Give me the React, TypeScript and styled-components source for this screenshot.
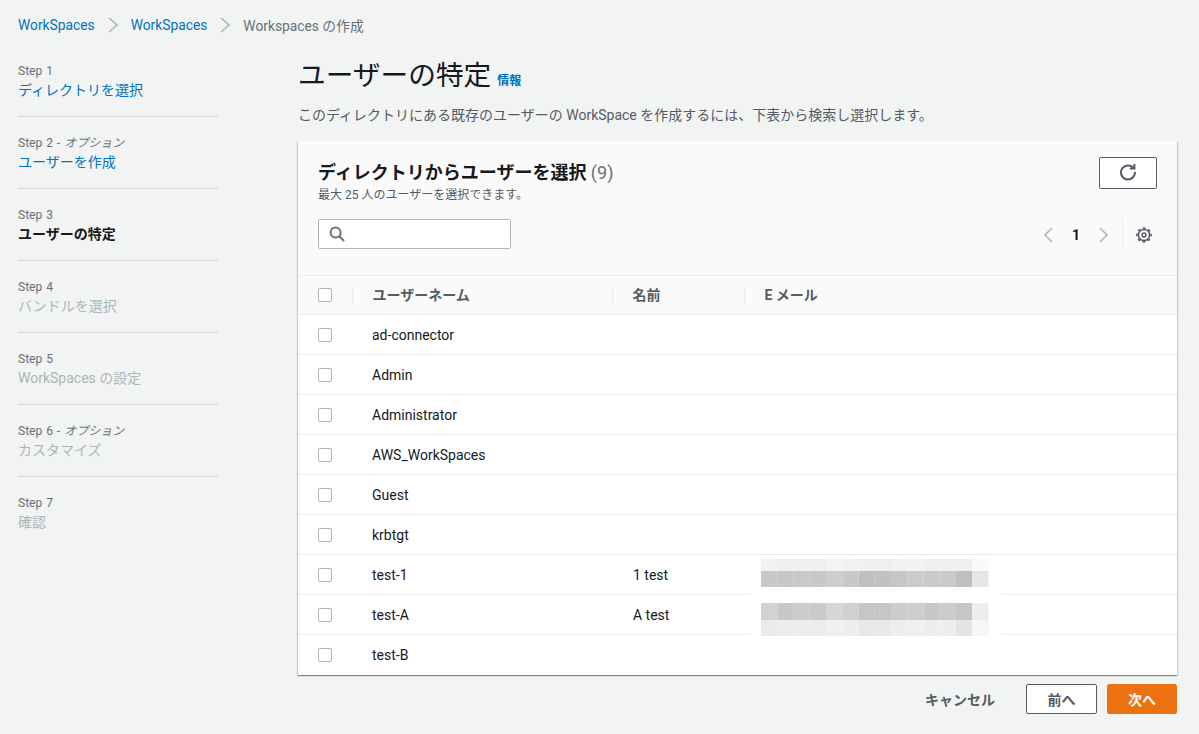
import styled, { createGlobalStyle } from "styled-components";

const GlobalStyle = createGlobalStyle`
  html, body {
    margin: 0;
    padding: 0;
    background-color: #f2f3f3;
    font-family: Roboto, "Noto Sans CJK JP", sans-serif;
    color: #16191f;
  }
  * {
    box-sizing: border-box;
  }
`;

const S = {
  Page: styled.div`
    width: 1199px;
    height: 734px;
    overflow: hidden;
    padding: 0 22px 0 18px;
  `,
  Breadcrumbs: styled.nav`
    display: flex;
    align-items: center;
    height: 50px;
    font-size: 13.8px;
  `,
  Crumb: styled.a<{ $current?: boolean }>`
    color: ${(p) => (p.$current ? "#687078" : "#0073bb")};
    white-space: nowrap;
  `,
  CrumbSep: styled.svg`
    width: 14px;
    height: 16px;
    margin: 0 11px;
    fill: none;
    stroke: #aab7b8;
    stroke-width: 1.6;
  `,
  Columns: styled.div`
    display: flex;
  `,
  Steps: styled.ol`
    list-style: none;
    margin: 0;
    padding: 0;
    width: 200px;
    margin-right: 80px;
    flex: none;
  `,
  Step: styled.li`
    height: 67px;
    margin-bottom: 5px;
    padding-top: 12px;
    border-bottom: 1px solid #d5dbdb;
    &:last-child {
      border-bottom: none;
    }
  `,
  StepLabel: styled.div`
    font-size: 12px;
    line-height: 18px;
    word-spacing: 1px;
    color: #687078;
    em {
      font-style: italic;
    }
  `,
  StepName: styled.div<{ $state: "done" | "active" | "todo" }>`
    font-size: 14px;
    line-height: 20px;
    color: ${(p) =>
      p.$state === "done" ? "#0073bb" : p.$state === "active" ? "#16191f" : "#aab7b8"};
    font-weight: ${(p) => (p.$state === "active" ? 700 : 400)};
  `,
  Main: styled.main`
    width: 879px;
    flex: none;
  `,
  Title: styled.div`
    display: flex;
    align-items: baseline;
    gap: 6px;
    height: 50px;
    padding-top: 6px;
  `,
  H1: styled.h1`
    margin: 0;
    font-size: 27.7px;
    line-height: 40px;
    font-weight: 400;
    color: #16191f;
  `,
  Info: styled.a`
    font-size: 12px;
    font-weight: 700;
    color: #0073bb;
  `,
  Lead: styled.p`
    margin: 0;
    height: 41px;
    padding-top: 5px;
    font-size: 14px;
    line-height: 20px;
    color: #545b64;
  `,
  Card: styled.section`
    position: relative;
    height: 534px;
    background-color: #fff;
    box-shadow: 0 1px 1px 0 rgba(0, 28, 36, 0.3), 1px 1px 1px 0 rgba(0, 28, 36, 0.15),
      -1px 1px 1px 0 rgba(0, 28, 36, 0.15);
  `,
  CardHead: styled.header`
    height: 135px;
    padding: 16px 20px;
    background-color: #fafafa;
    border-bottom: 1px solid #eaeded;
  `,
  HeadTop: styled.div`
    display: flex;
    justify-content: space-between;
    align-items: flex-start;
    height: 62px;
  `,
  HeadText: styled.div`
    padding-top: 1px;
  `,
  H2: styled.h2`
    margin: 0;
    font-size: 18px;
    line-height: 30px;
    font-weight: 700;
    color: #16191f;
    span {
      font-weight: 400;
      color: #687078;
    }
  `,
  Sub: styled.div`
    font-size: 12px;
    line-height: 14px;
    color: #545b64;
  `,
  Button: styled.button<{ $primary?: boolean }>`
    display: flex;
    align-items: center;
    justify-content: center;
    height: 30px;
    padding: 0;
    border-radius: 2px;
    border: 1px solid ${(p) => (p.$primary ? "#ec7211" : "#545b64")};
    background-color: ${(p) => (p.$primary ? "#ec7211" : "#fff")};
    color: ${(p) => (p.$primary ? "#fff" : "#545b64")};
    font-family: inherit;
    font-size: 14px;
    font-weight: 700;
  `,
  RefreshButton: styled.button`
    display: flex;
    align-items: center;
    justify-content: center;
    width: 58px;
    height: 32px;
    padding: 0 0 2px;
    background-color: #fff;
    border: 1px solid #545b64;
    border-radius: 2px;
    svg {
      width: 18px;
      height: 18px;
      fill: none;
      stroke: #545b64;
      stroke-width: 2;
    }
  `,
  Tools: styled.div`
    display: flex;
    justify-content: space-between;
    align-items: flex-start;
  `,
  Search: styled.div`
    display: flex;
    align-items: center;
    width: 193px;
    height: 30px;
    padding-left: 10px;
    background-color: #fff;
    border: 1px solid #aab7b8;
    border-radius: 2px;
    svg {
      width: 16px;
      height: 16px;
      fill: none;
      stroke: #687078;
      stroke-width: 2;
    }
  `,
  Pager: styled.div`
    display: flex;
    align-items: center;
    height: 32px;
    padding-right: 4px;
    svg {
      fill: none;
    }
  `,
  PageArrow: styled.svg`
    width: 12px;
    height: 18px;
    stroke: #aab7b8;
    stroke-width: 1.6;
  `,
  PageNum: styled.span`
    width: 44px;
    text-align: center;
    font-size: 14px;
    font-weight: 700;
    color: #16191f;
  `,
  PagerDivider: styled.div`
    width: 1px;
    height: 32px;
    margin: 0 12px;
    background-color: #eaeded;
  `,
  Gear: styled.svg`
    width: 18px;
    height: 18px;
    stroke: #545b64;
  `,
  HeadRow: styled.div`
    display: grid;
    grid-template-columns: 54px 260px 132px 1fr;
    align-items: center;
    height: 39px;
    background-color: #fafafa;
    border-bottom: 1px solid #eaeded;
    font-size: 14px;
    font-weight: 700;
    color: #545b64;
  `,
  HeadCell: styled.div`
    height: 19px;
    line-height: 19px;
    padding-left: 19.5px;
    border-left: 1px solid #eaeded;
    white-space: nowrap;
  `,
  CheckCell: styled.div`
    display: flex;
    align-items: center;
    padding-left: 20px;
  `,
  Check: styled.span`
    display: block;
    width: 14px;
    height: 14px;
    background-color: #fff;
    border: 1px solid #aab7b8;
    border-radius: 2px;
  `,
  Row: styled.div`
    display: grid;
    grid-template-columns: 54px 261px 131px 1fr;
    align-items: center;
    height: 40px;
    border-bottom: 1px solid #eaeded;
    font-size: 14px;
    color: #16191f;
    &:last-of-type {
      border-bottom-color: transparent;
    }
  `,
  Cell: styled.div`
    padding-left: 20px;
    white-space: nowrap;
  `,
  Mosaic: styled.svg`
    position: absolute;
    left: 452px;
    top: 414px;
    width: 252px;
    height: 83px;
  `,
  Footer: styled.footer`
    display: flex;
    justify-content: flex-end;
    align-items: center;
    margin-top: 9px;
    height: 30px;
  `,
  Cancel: styled.a`
    margin-right: 31px;
    font-size: 14px;
    font-weight: 700;
    color: #545b64;
  `,
  FooterButton: styled.div<{ $gap?: boolean }>`
    width: ${(p) => (p.$gap ? "71px" : "70px")};
    margin-right: ${(p) => (p.$gap ? "10px" : "0")};
    button {
      width: 100%;
    }
  `,
};

const steps: { label: string; option?: boolean; name: string; state: "done" | "active" | "todo" }[] = [
  { label: "Step 1", name: "ディレクトリを選択", state: "done" },
  { label: "Step 2", option: true, name: "ユーザーを作成", state: "done" },
  { label: "Step 3", name: "ユーザーの特定", state: "active" },
  { label: "Step 4", name: "バンドルを選択", state: "todo" },
  { label: "Step 5", name: "WorkSpaces の設定", state: "todo" },
  { label: "Step 6", option: true, name: "カスタマイズ", state: "todo" },
  { label: "Step 7", name: "確認", state: "todo" },
];

const users = [
  { user: "ad-connector", name: "" },
  { user: "Admin", name: "" },
  { user: "Administrator", name: "" },
  { user: "AWS_WorkSpaces", name: "" },
  { user: "Guest", name: "" },
  { user: "krbtgt", name: "" },
  { user: "test-1", name: "1 test" },
  { user: "test-A", name: "A test" },
  { user: "test-B", name: "" },
];

// blurred e-mail addresses, one grey value per block
const blur = [
  { y: 4, h: 12, cells: [242, 240, 240, 239, 243, 241, 240, 239, 241, 242, 240, 240, 239, 250] },
  { y: 16, h: 16, cells: [200, 198, 201, 200, 206, 200, 191, 193, 198, 203, 202, 202, 191, 230] },
  { y: 48, h: 17, cells: [210, 200, 204, 202, 214, 208, 198, 198, 204, 206, 200, 204, 198, 236] },
  { y: 65, h: 16, cells: [234, 236, 236, 236, 240, 238, 232, 233, 238, 240, 238, 238, 228, 246] },
];

const Chevron = ({ left }: { left?: boolean }) => (
  <path d={left ? "M10 2 3 9l7 7" : "M2 2l7 7-7 7"} />
);

const App = () => {
  return (
    <S.Page>
      <GlobalStyle />
      <S.Breadcrumbs>
        <S.Crumb>WorkSpaces</S.Crumb>
        <S.CrumbSep viewBox="0 0 14 16">
          <path d="M3 1l8 7-8 7" />
        </S.CrumbSep>
        <S.Crumb>WorkSpaces</S.Crumb>
        <S.CrumbSep viewBox="0 0 14 16">
          <path d="M3 1l8 7-8 7" />
        </S.CrumbSep>
        <S.Crumb $current>Workspaces の作成</S.Crumb>
      </S.Breadcrumbs>
      <S.Columns>
        <S.Steps>
          {steps.map((s) => (
            <S.Step key={s.label}>
              <S.StepLabel>
                {s.label}
                {s.option && (
                  <>
                    {" - "}
                    <em>オプション</em>
                  </>
                )}
              </S.StepLabel>
              <S.StepName $state={s.state}>{s.name}</S.StepName>
            </S.Step>
          ))}
        </S.Steps>
        <S.Main>
          <S.Title>
            <S.H1>ユーザーの特定</S.H1>
            <S.Info>情報</S.Info>
          </S.Title>
          <S.Lead>このディレクトリにある既存のユーザーの WorkSpace を作成するには、下表から検索し選択します。</S.Lead>
          <S.Card>
            <S.CardHead>
              <S.HeadTop>
                <S.HeadText>
                  <S.H2>
                    ディレクトリからユーザーを選択 <span>(9)</span>
                  </S.H2>
                  <S.Sub>最大 25 人のユーザーを選択できます。</S.Sub>
                </S.HeadText>
                <S.RefreshButton>
                  <svg viewBox="0 0 18 18">
                    <path d="M14.6 5.2A7 7 0 1 0 16 9" />
                    <path d="M15.4 1v4.6h-4.6" />
                  </svg>
                </S.RefreshButton>
              </S.HeadTop>
              <S.Tools>
                <S.Search>
                  <svg viewBox="0 0 16 16">
                    <circle cx="6.6" cy="6.6" r="5" />
                    <path d="M10.3 10.3 15 15" />
                  </svg>
                </S.Search>
                <S.Pager>
                  <S.PageArrow viewBox="0 0 12 18">
                    <Chevron left />
                  </S.PageArrow>
                  <S.PageNum>1</S.PageNum>
                  <S.PageArrow viewBox="0 0 12 18">
                    <Chevron />
                  </S.PageArrow>
                  <S.PagerDivider />
                  <S.Gear viewBox="0 0 18 18">
                    <circle cx="9" cy="9" r="1.9" strokeWidth="1.5" />
                    <circle cx="9" cy="9" r="5.6" strokeWidth="1.5" />
                    <circle
                      cx="9"
                      cy="9"
                      r="7"
                      strokeWidth="1.6"
                      strokeDasharray="2.7 2.8"
                      strokeDashoffset="1.35"
                    />
                  </S.Gear>
                </S.Pager>
              </S.Tools>
            </S.CardHead>
            <S.HeadRow>
              <S.CheckCell>
                <S.Check />
              </S.CheckCell>
              <S.HeadCell>ユーザーネーム</S.HeadCell>
              <S.HeadCell>名前</S.HeadCell>
              <S.HeadCell>E メール</S.HeadCell>
            </S.HeadRow>
            {users.map((u) => (
              <S.Row key={u.user}>
                <S.CheckCell>
                  <S.Check />
                </S.CheckCell>
                <S.Cell>{u.user}</S.Cell>
                <S.Cell>{u.name}</S.Cell>
                <S.Cell />
              </S.Row>
            ))}
            <S.Mosaic viewBox="0 0 252 83">
              <rect width="252" height="83" fill="#fff" />
              {blur.map((line) =>
                line.cells.map((g, i) => (
                  <rect
                    key={`${line.y}-${i}`}
                    x={11 + i * 16.25}
                    y={line.y}
                    width="16.3"
                    height={line.h}
                    fill={`rgb(${g},${g},${g})`}
                  />
                ))
              )}
            </S.Mosaic>
          </S.Card>
          <S.Footer>
            <S.Cancel>キャンセル</S.Cancel>
            <S.FooterButton $gap>
              <S.Button>前へ</S.Button>
            </S.FooterButton>
            <S.FooterButton>
              <S.Button $primary>次へ</S.Button>
            </S.FooterButton>
          </S.Footer>
        </S.Main>
      </S.Columns>
    </S.Page>
  );
};

export default App;
